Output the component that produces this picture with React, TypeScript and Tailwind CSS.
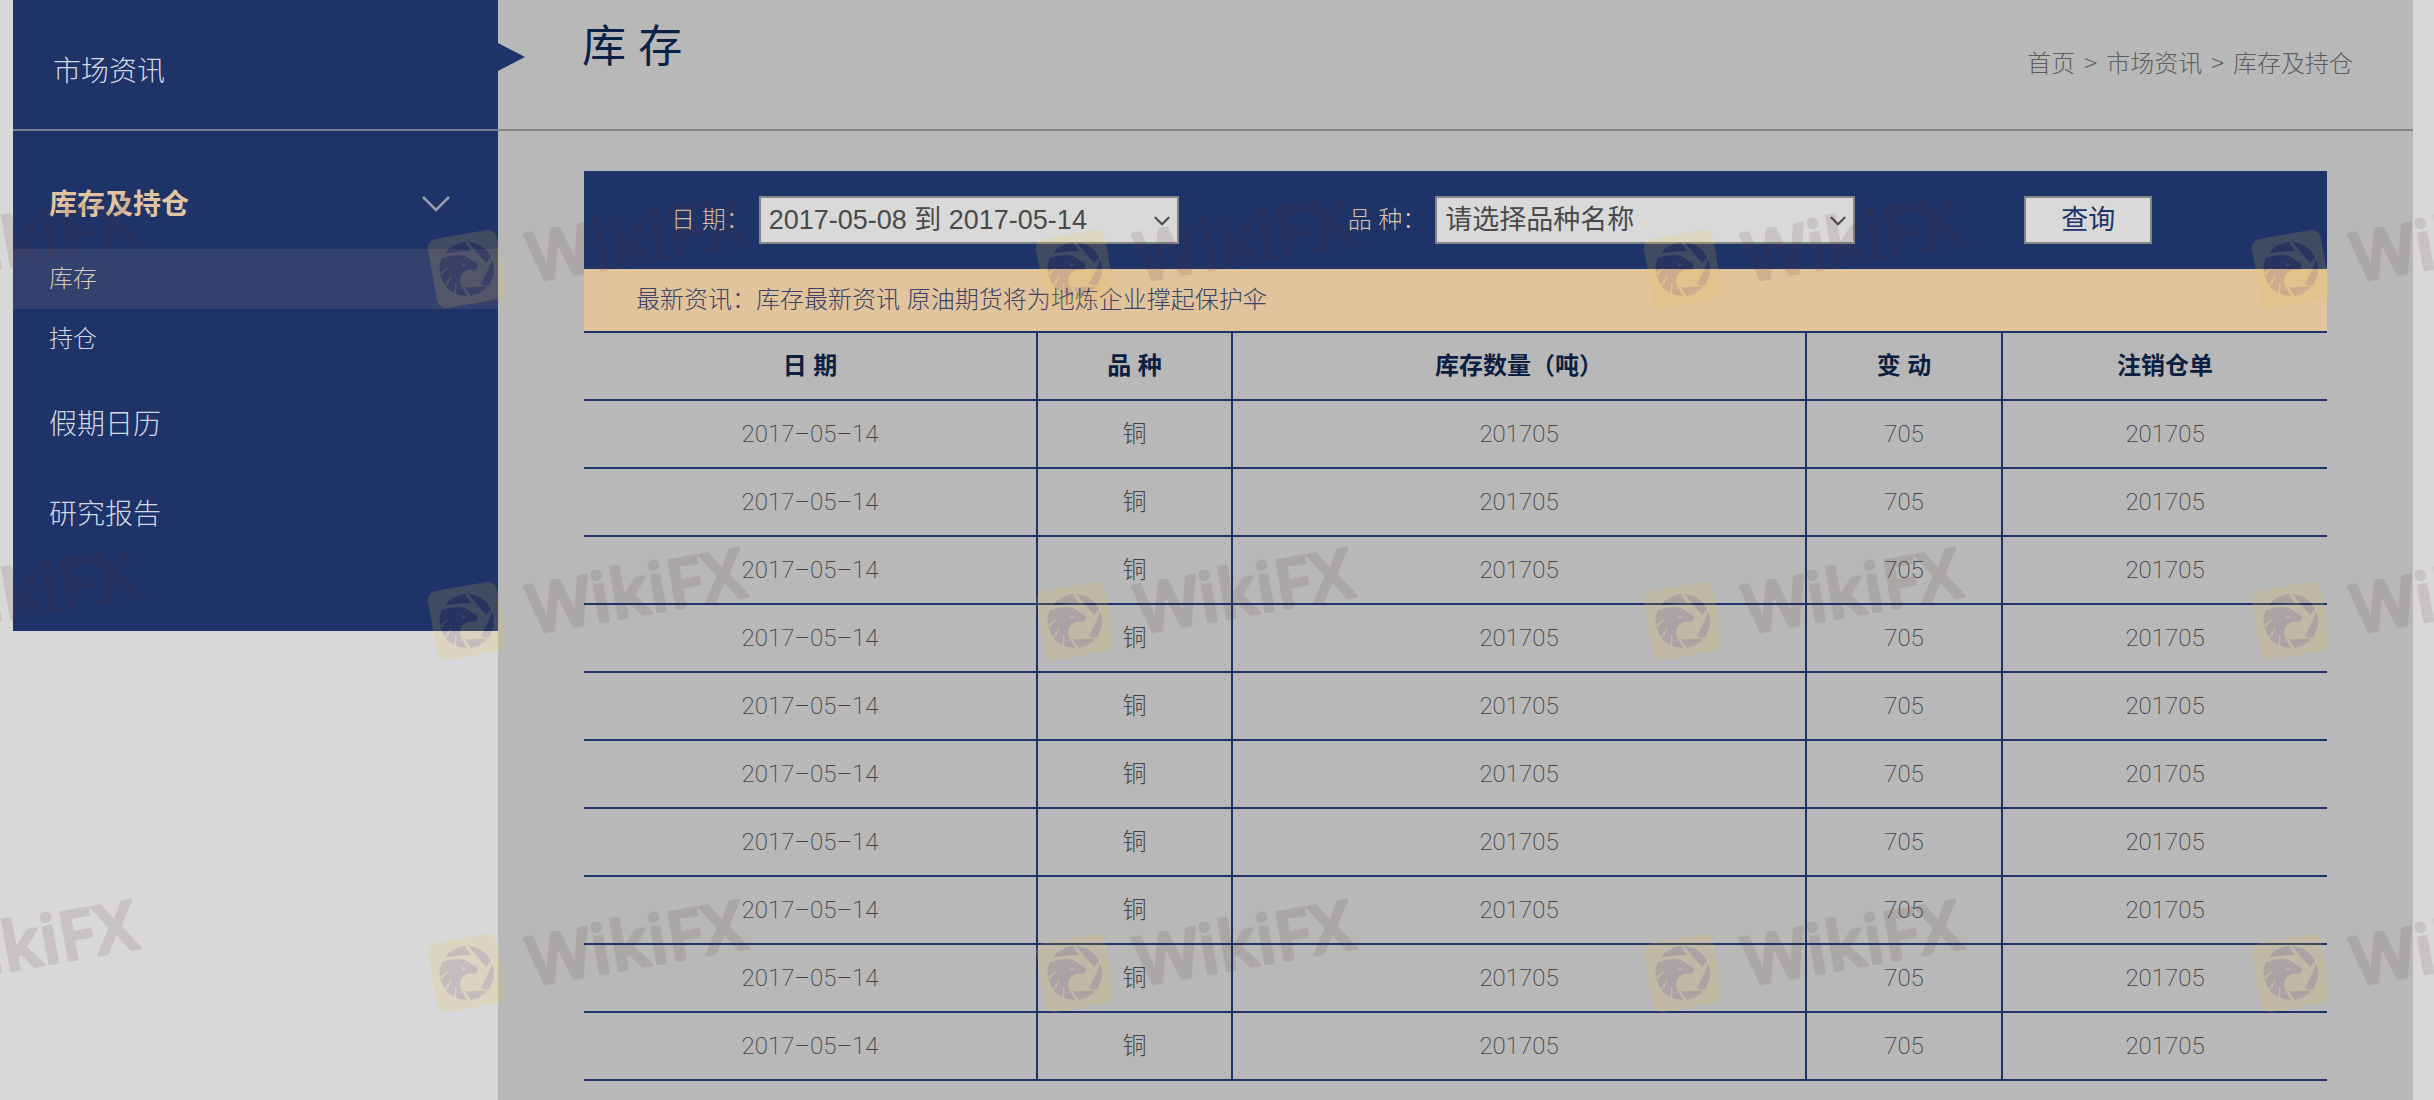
import clsx from "clsx";
import { ChevronDown } from "lucide-react";

const SUB_MENU = [
  { label: "库存", active: true },
  { label: "持仓", active: false },
];

const OTHER_MENU = ["假期日历", "研究报告"];

const COLUMNS = ["日 期", "品 种", "库存数量（吨）", "变 动", "注销仓单"];

const ROWS = Array.from({ length: 10 }, () => ({
  date: "2017–05–14",
  product: "铜",
  amount: "201705",
  change: "705",
  receipt: "201705",
}));

function Sidebar() {
  return (
    <aside className="relative h-[631px] w-[485px] shrink-0 bg-[#1e3367] text-[28px] leading-[40px] font-light text-[#d3d9e2]">
      <div className="h-[131px] border-b-2 border-[#75808c] pt-[52px] pl-10">
        <a href="#market">市场资讯</a>
      </div>
      <svg viewBox="0 0 27 28" className="absolute top-[43px] left-full h-[28px] w-[27px] fill-[#1e3367]">
        <path d="M0 0L27 14L0 28Z" />
      </svg>

      <nav className="pt-[54px]">
        <button
          type="button"
          className="mb-6 flex w-full items-center justify-between pr-[46px] pl-9 font-bold text-[#e2c5a0]"
        >
          库存及持仓
          <svg viewBox="0 0 32 18" className="h-[18px] w-[32px] fill-none stroke-[#9a9cab] stroke-[2.5]">
            <path d="M3 1L16 14L29 1" />
          </svg>
        </button>
        {SUB_MENU.map((item) => (
          <a
            key={item.label}
            href={`#${item.label}`}
            className={clsx(
              "block pl-9 text-2xl leading-[60px]",
              item.active && "bg-[#33416f] text-[#d6c6b4]",
            )}
          >
            {item.label}
          </a>
        ))}
        <div className="mt-[11px]">
          {OTHER_MENU.map((label) => (
            <a key={label} href={`#${label}`} className="block pl-9 leading-[90px]">
              {label}
            </a>
          ))}
        </div>
      </nav>
    </aside>
  );
}

function FilterSelect({ id, label, value }: { id: string; label: string; value: string }) {
  return (
    <div className="flex items-center">
      <label htmlFor={id} className="mr-[9px] text-2xl font-light text-[#d9c3ab]">
        {label}
      </label>
      <div className="relative">
        <select
          id={id}
          className="h-[48px] w-[420px] appearance-none border-2 border-[#858585] bg-[#d9d9d9] px-2 text-[27px] leading-[40px] text-[#4a4a4a]"
        >
          <option>{value}</option>
        </select>
        <ChevronDown
          className="pointer-events-none absolute top-[12px] right-[4px] size-[26px] text-[#4a4a4a]"
          strokeWidth={2}
        />
      </div>
    </div>
  );
}

function InventoryTable() {
  return (
    <table className="w-full table-fixed border-collapse text-center text-2xl">
      <colgroup>
        <col className="w-[453px]" />
        <col className="w-[195px]" />
        <col />
        <col className="w-[196px]" />
        <col className="w-[325px]" />
      </colgroup>
      <thead>
        <tr className="h-[68px] border-y-2 border-[#1e3367] text-[#0c1f42]">
          {COLUMNS.map((name) => (
            <th key={name} className="border-l-2 border-[#1e3367] p-0 font-bold first:border-l-0">
              {name}
            </th>
          ))}
        </tr>
      </thead>
      <tbody className="font-['Roboto','Noto_Sans_CJK_SC',sans-serif] font-extralight text-[#444444]">
        {ROWS.map((row, i) => (
          <tr key={i} className="h-[68px] border-b-2 border-[#1e3367]">
            {Object.values(row).map((cell, j) => (
              <td key={j} className="border-l-2 border-[#1e3367] p-0 first:border-l-0">
                {cell}
              </td>
            ))}
          </tr>
        ))}
      </tbody>
    </table>
  );
}

function WatermarkLogo() {
  return (
    <svg viewBox="0 0 400 160" className="h-[160px] w-[400px] overflow-visible" aria-hidden="true">
      <g opacity="0.16" transform="translate(60 90)">
        <rect x="-35" y="-35" width="70" height="70" rx="9" fill="#f0c346" transform="rotate(-10)" />
        <g fill="#61393c">
          <path d="M-22 -15.5A27 27 0 0 1 -2 -27L4 -18Q-8 -18 -22 -15.5Z" />
          <path d="M1 -27A27 27 0 0 1 24 -12L19 -6Z" />
          <path d="M25.5 -9A27 27 0 0 1 21 17L14 15Z" />
          <path d="M-2 18.5L20 17.5A27 27 0 0 1 4 27Z" />
          <path d="M-25 -11Q-12 -16 -2 -13Q2 -11 4 -9Q10 -8 11 -2L9 1Q0 -1 -5 5Q-9 11 -5 18L0 27A27 27 0 0 1 -25 -11Z" />
        </g>
        <path d="M-7 -6L-1 -5L-3 -3Z" fill="#f0c346" />
        <path d="M-27 6L-20 -1M-22 18L-16 8M-12 25L-11 14" stroke="#f0c346" strokeWidth="1.5" />
      </g>
      <text
        transform="translate(125 103) rotate(-10)"
        fontSize="68"
        fontWeight="600"
        fill="#61393c"
        stroke="#61393c"
        strokeWidth="3"
        strokeLinejoin="round"
        opacity="0.13"
        className="font-['Open_Sans',sans-serif]"
      >
        WikiFX
      </text>
    </svg>
  );
}

function Watermark() {
  return (
    <div className="pointer-events-none absolute inset-0 overflow-hidden">
      <div className="-ml-[201px] grid grid-cols-[repeat(5,608px)] pt-[179px]">
        {Array.from({ length: 15 }, (_, i) => (
          <div key={i} className="h-[352px]">
            <WatermarkLogo />
          </div>
        ))}
      </div>
    </div>
  );
}

export default function App() {
  return (
    <div className="relative flex min-h-screen overflow-hidden bg-[#d8d8d8] pr-[21px] pl-[13px] font-['Liberation_Sans','Noto_Sans_CJK_SC',sans-serif]">
      <Sidebar />

      <main className="min-w-0 flex-1 bg-[#b8b8b8]">
        <header className="flex h-[131px] justify-between border-b-2 border-[#868686] pr-[60px] pl-[84px]">
          <h1 className="pt-[15px] text-[44px] leading-[64px] text-[#0b2145]">库 存</h1>
          <nav className="flex gap-[9px] pt-[44px] font-['Noto_Sans_CJK_SC',sans-serif] text-2xl leading-[36px] font-light text-[#5e5e5e]">
            <a href="#home">首页</a>
            <span>&gt;</span>
            <a href="#market">市场资讯</a>
            <span>&gt;</span>
            <a href="#inventory">库存及持仓</a>
          </nav>
        </header>

        <section className="px-[86px] pt-10">
          <form className="flex h-[98px] items-center gap-[169px] bg-[#1e3367] pl-[87px]">
            <FilterSelect id="date" label="日 期：" value="2017-05-08 到 2017-05-14" />
            <FilterSelect id="product" label="品 种：" value="请选择品种名称" />
            <button
              type="button"
              className="h-[48px] w-[128px] border-2 border-[#858585] bg-[#d9d9d9] text-[27px] leading-[40px] text-[#1e3367]"
            >
              查询
            </button>
          </form>
          <p className="bg-[#e1c39c] pl-[52px] text-2xl leading-[62px] font-light text-[#3b4468]">
            最新资讯：库存最新资讯 原油期货将为地炼企业撑起保护伞
          </p>
          <InventoryTable />
        </section>
      </main>

      <Watermark />
    </div>
  );
}
